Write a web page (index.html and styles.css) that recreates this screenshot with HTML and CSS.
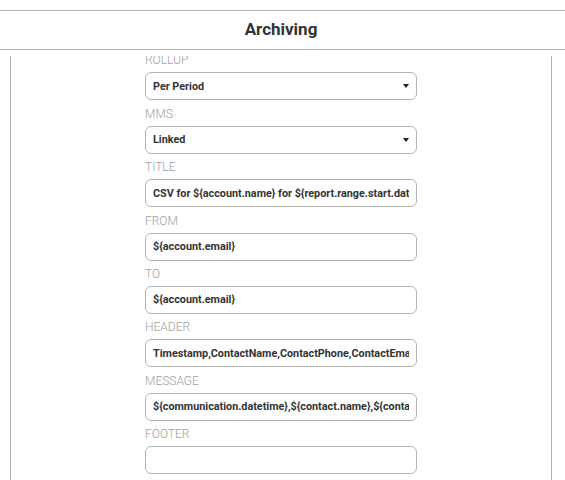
FILE: index.html
```html
<!DOCTYPE html>
<html>
<head>
    <title>Archiving</title>
    <link rel="stylesheet" href="styles.css">
</head>
<body>
    <div class="header">
        <h2>Archiving</h2>
    </div>

    <div class="panel">
        <form class="settings">
            <div class="field">
                <label>Rollup</label>
                <div class="select">Per Period<span class="caret"></span></div>
            </div>
            <div class="field">
                <label>MMS</label>
                <div class="select">Linked<span class="caret"></span></div>
            </div>
            <div class="field">
                <label>Title</label>
                <input type="text" value="CSV for ${account.name} for ${report.range.start.date}">
            </div>
            <div class="field">
                <label>From</label>
                <input type="text" value="${account.email}">
            </div>
            <div class="field">
                <label>To</label>
                <input type="text" value="${account.email}">
            </div>
            <div class="field">
                <label>Header</label>
                <input type="text" value="Timestamp,ContactName,ContactPhone,ContactEmail">
            </div>
            <div class="field">
                <label>Message</label>
                <input type="text" value="${communication.datetime},${contact.name},${contact.phone}">
            </div>
            <div class="field">
                <label>Footer</label>
                <input type="text" value="">
            </div>
        </form>
    </div>
</body>
</html>
```

FILE: styles.css
```css
html, body { margin: 0; height: 100%; overflow: hidden; }
body { font-family: Roboto, "Liberation Sans", sans-serif; background: #fff; color: #333; }

.header { margin-top: 10px; border-top: 1px solid #a9b5b2; border-bottom: 1px solid #a9b5b2; height: 38px; padding-right: 3px; display: flex; align-items: center; justify-content: center; }
.header h2 { margin: 0; font-size: 17px; font-weight: 700; color: #333; padding-bottom: 2px; }

.panel { margin: 6px 13px 0 10px; border-left: 1px solid #a9b5b2; border-right: 1px solid #a9b5b2; height: 440px; overflow: hidden; }
.settings { width: 272px; margin: -9px auto 0; }

.field { padding-top: 5.4px; }
.field label { display: block; font-size: 12px; line-height: 16px; font-weight: 300; color: #a0a0a0; text-transform: uppercase; margin-bottom: 4px; }

.select, .field input { box-sizing: border-box; width: 100%; height: 28px; border: 1px solid #b4b4b4; border-radius: 6px; background: #fff; padding: 0 7px; font-family: inherit; font-size: 10.8px; font-weight: 700; color: #333; }
.select { display: flex; align-items: center; justify-content: space-between; }
.field input { outline: none; display: block; }
.caret { width: 0; height: 0; border-left: 3.5px solid transparent; border-right: 3.5px solid transparent; border-top: 4px solid #222; margin-right: 0; }
```
